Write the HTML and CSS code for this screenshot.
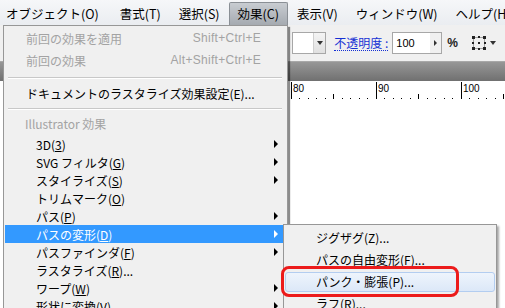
FILE: index.html
```html
<!DOCTYPE html>
<html lang="ja">
<head>
    <meta charset="UTF-8">
    <meta name="viewport" content="width=device-width, initial-scale=1.0">
    <title>効果メニュー</title>
    <link rel="stylesheet" href="styles.css">
</head>
<body>
    <svg width="0" height="0" class="defs">
        <defs>
            <g id="ticks" stroke="#000" stroke-width="1">
                <line x1="8.5" y1="4" x2="8.5" y2="8"/>
                <line x1="17.5" y1="4" x2="17.5" y2="8"/>
                <line x1="25.5" y1="4" x2="25.5" y2="8"/>
                <line x1="34.5" y1="4" x2="34.5" y2="8"/>
                <line x1="42.5" y1="0" x2="42.5" y2="8"/>
                <line x1="51.5" y1="4" x2="51.5" y2="8"/>
                <line x1="59.5" y1="4" x2="59.5" y2="8"/>
                <line x1="68.5" y1="4" x2="68.5" y2="8"/>
                <line x1="76.5" y1="4" x2="76.5" y2="8"/>
            </g>
        </defs>
    </svg>

    <div class="menubar">
        <span class="menubar-item">オブジェクト(O)</span>
        <span class="menubar-item">書式(T)</span>
        <span class="menubar-item">選択(S)</span>
        <span class="menubar-item active">効果(C)</span>
        <span class="menubar-item">表示(V)</span>
        <span class="menubar-item">ウィンドウ(W)</span>
        <span class="menubar-item">ヘルプ(H)</span>
    </div>

    <div class="toolbar">
        <div class="combo">
            <span class="combo-field"></span>
            <span class="combo-btn"><span class="down"></span></span>
        </div>
        <span class="opacity-label">不透明度 :</span>
        <div class="num-input">
            <span class="num-value">100</span>
            <span class="spin"><span class="right"></span></span>
        </div>
        <span class="unit">%</span>
        <span class="icon-btn">
            <svg width="16" height="16" viewBox="0 0 16 16">
                <rect x="2.5" y="2.5" width="11" height="11" fill="none" stroke="#555" stroke-dasharray="1 1"/>
                <rect x="1" y="1" width="3" height="3" fill="#222"/>
                <rect x="12" y="1" width="3" height="3" fill="#222"/>
                <rect x="1" y="12" width="3" height="3" fill="#222"/>
                <rect x="12" y="12" width="3" height="3" fill="#222"/>
                <rect x="7" y="1" width="2" height="2" fill="#222"/>
                <rect x="7" y="13" width="2" height="2" fill="#222"/>
                <rect x="1" y="7" width="2" height="2" fill="#222"/>
                <rect x="13" y="7" width="2" height="2" fill="#222"/>
                <rect x="7" y="7" width="2" height="2" fill="#222"/>
            </svg>
            <span class="down"></span>
        </span>
    </div>

    <div class="tabbar"></div>

    <div class="ruler">
        <div class="ruler-corner"></div>
        <div class="ruler-cell"><span>80</span><svg class="ticks" width="85" height="8"><use href="#ticks"/></svg></div>
        <div class="ruler-cell"><span>90</span><svg class="ticks" width="85" height="8"><use href="#ticks"/></svg></div>
        <div class="ruler-cell"><span>100</span><svg class="ticks" width="85" height="8"><use href="#ticks"/></svg></div>
    </div>

    <div class="canvas"></div>

    <!-- 効果メニュー -->
    <div class="menu">
        <div class="item tall disabled"><span>前回の効果を適用</span><span class="key">Shift+Ctrl+E</span></div>
        <div class="item tall disabled"><span>前回の効果</span><span class="key">Alt+Shift+Ctrl+E</span></div>
        <div class="sep"></div>
        <div class="item"><span>ドキュメントのラスタライズ効果設定(E)...</span></div>
        <div class="sep"></div>
        <div class="group-label">Illustrator 効果</div>
        <div class="item fx"><span>3D(<u>3</u>)</span><span class="arrow"></span></div>
        <div class="item fx"><span>SVG フィルタ(<u>G</u>)</span><span class="arrow"></span></div>
        <div class="item fx"><span>スタイライズ(<u>S</u>)</span><span class="arrow"></span></div>
        <div class="item fx"><span>トリムマーク(<u>O</u>)</span></div>
        <div class="item fx"><span>パス(<u>P</u>)</span><span class="arrow"></span></div>
        <div class="item fx selected"><span>パスの変形(<u>D</u>)</span><span class="arrow"></span></div>
        <div class="item fx"><span>パスファインダ(<u>F</u>)</span><span class="arrow"></span></div>
        <div class="item fx"><span>ラスタライズ(<u>R</u>)...</span></div>
        <div class="item fx"><span>ワープ(<u>W</u>)</span><span class="arrow"></span></div>
        <div class="item fx"><span>形状に変換(<u>V</u>)</span><span class="arrow"></span></div>
    </div>

    <!-- パスの変形 サブメニュー -->
    <div class="submenu">
        <div class="sub-item">ジグザグ(Z)...</div>
        <div class="sub-item">パスの自由変形(F)...</div>
        <div class="sub-item hover">パンク・膨張(P)...</div>
        <div class="sub-item">ラフ(R)...</div>
    </div>

    <div class="callout"></div>
</body>
</html>
```

FILE: styles.css
```css
* {
    box-sizing: border-box;
}
body {
    margin: 0;
    width: 505px;
    height: 308px;
    overflow: hidden;
    position: relative;
    font-family: "Noto Sans CJK JP", "Liberation Sans", sans-serif;
    font-size: 12px;
    color: #000;
    background: #fff;
}
.defs {
    position: absolute;
}

/* メニューバー */
.menubar {
    display: flex;
    height: 25px;
    font-size: 12.5px;
    background: linear-gradient(#f6f7f9, #eaedf1);
}
.menubar-item {
    margin-top: 2px;
    padding: 0 8px 0 8px;
    line-height: 22px;
    border: 1px solid transparent;
    border-bottom: 0;
    white-space: nowrap;
}
.menubar-item:first-child {
    padding: 0 11px 0 5px;
}
.menubar-item.active {
    background: linear-gradient(#c8ccd1, #a5aab0);
    border-color: #8a8f95;
    border-radius: 2px 2px 0 0;
}

/* コントロールパネル */
.toolbar {
    display: flex;
    align-items: center;
    justify-content: flex-end;
    height: 36px;
    padding-right: 9px;
    background: #f0f0f0;
}
.combo {
    display: flex;
    height: 22px;
    border: 1px solid #a7a7a7;
    background: #fff;
}
.combo-field {
    width: 20px;
}
.combo-btn {
    display: flex;
    align-items: center;
    justify-content: center;
    width: 12px;
    border-left: 1px solid #d0d0d0;
    background: linear-gradient(#f4f4f4, #e0e0e0);
}
.down {
    width: 0;
    height: 0;
    border-top: 4px solid #333;
    border-left: 3px solid transparent;
    border-right: 3px solid transparent;
}
.opacity-label {
    margin-left: 8px;
    color: #1530d4;
    border-bottom: 1px dotted #1530d4;
    line-height: 14px;
}
.num-input {
    display: flex;
    align-items: center;
    margin-left: 4px;
    width: 50px;
    height: 22px;
    border: 1px solid #a7a7a7;
    background: #fff;
}
.num-value {
    flex: 1;
    padding-left: 3px;
    font-family: "Liberation Sans", sans-serif;
    font-size: 11px;
}
.spin {
    display: flex;
    align-items: center;
    justify-content: center;
    width: 11px;
    height: 100%;
    background: #f0f0f0;
}
.right {
    width: 0;
    height: 0;
    border-left: 3px solid #333;
    border-top: 3px solid transparent;
    border-bottom: 3px solid transparent;
}
.unit {
    margin-left: 5px;
    font-family: "Liberation Sans", sans-serif;
    font-size: 12px;
    font-weight: bold;
    color: #222;
}
.icon-btn {
    display: flex;
    align-items: center;
    gap: 3px;
    margin-left: 13px;
}

.tabbar {
    height: 20px;
    background: linear-gradient(#979797, #707070);
    border-top: 1px solid #a8a8a8;
}

/* 定規 */
.ruler {
    display: flex;
    height: 18px;
    background: #fff;
}
.ruler-corner {
    flex: none;
    width: 291px;
}
.ruler-cell {
    flex: none;
    width: 85px;
    height: 17px;
    margin-top: 1px;
    display: flex;
    flex-direction: column;
    justify-content: space-between;
    border-left: 1px solid #000;
}
.ruler-cell span {
    padding-left: 1px;
    margin-top: 2px;
    font-family: "Liberation Sans", sans-serif;
    font-size: 10px;
    line-height: 10px;
}
.ticks {
    display: block;
    margin-left: -1px;
}
.canvas {
    height: 220px;
    background: #fff;
}

/* ドロップダウンメニュー */
.menu {
    position: absolute;
    left: 3px;
    top: 25px;
    width: 285px;
    height: 300px;
    padding-top: 1px;
    background: #f0f0f0;
    border: 1px solid #979797;
    box-shadow: 2px 2px 1px rgba(0, 0, 0, 0.45);
}
.item {
    display: flex;
    align-items: center;
    justify-content: space-between;
    height: 18px;
    padding: 0 9px 0 22px;
    white-space: nowrap;
}
.item.tall {
    height: 22px;
}
.item.fx {
    padding-left: 32px;
}
.item.disabled {
    color: #a3a3a3;
}
.item.selected {
    margin-left: 1px;
    padding-left: 31px;
    background: #3399ff;
    color: #fff;
}
.key {
    margin-right: 17px;
    font-family: "Liberation Sans", sans-serif;
    letter-spacing: 0.3px;
}
.sep {
    height: 2px;
    margin: 6px 5px 5px 4px;
    background: #c8c8c8;
    border-bottom: 1px solid #fff;
}
.sep:first-of-type {
    margin-top: 7px;
}
.group-label {
    height: 20px;
    line-height: 18px;
    padding-left: 21px;
    color: #a3a3a3;
}
.arrow {
    width: 0;
    height: 0;
    border-left: 4px solid #000;
    border-top: 4px solid transparent;
    border-bottom: 4px solid transparent;
}
.selected .arrow {
    border-left-color: #fff;
}
u {
    text-underline-offset: 1px;
}

/* サブメニュー */
.submenu {
    position: absolute;
    left: 283px;
    top: 224px;
    width: 214px;
    height: 100px;
    padding-top: 2px;
    background: #f0f0f0;
    border: 1px solid #979797;
    box-shadow: 2px 2px 2px rgba(0, 0, 0, 0.35);
}
.sub-item {
    height: 22px;
    line-height: 22px;
    padding-left: 32px;
    white-space: nowrap;
}
.sub-item.hover {
    height: 20px;
    line-height: 18px;
    margin: 1px;
    padding-left: 30px;
    border: 1px solid #b3cdf0;
    border-radius: 3px;
    background: linear-gradient(#eef4fc, #dce8f8);
}

.callout {
    position: absolute;
    left: 281px;
    top: 266px;
    width: 178px;
    height: 31px;
    border: 3px solid #ec1b1b;
    border-radius: 8px;
}
```
